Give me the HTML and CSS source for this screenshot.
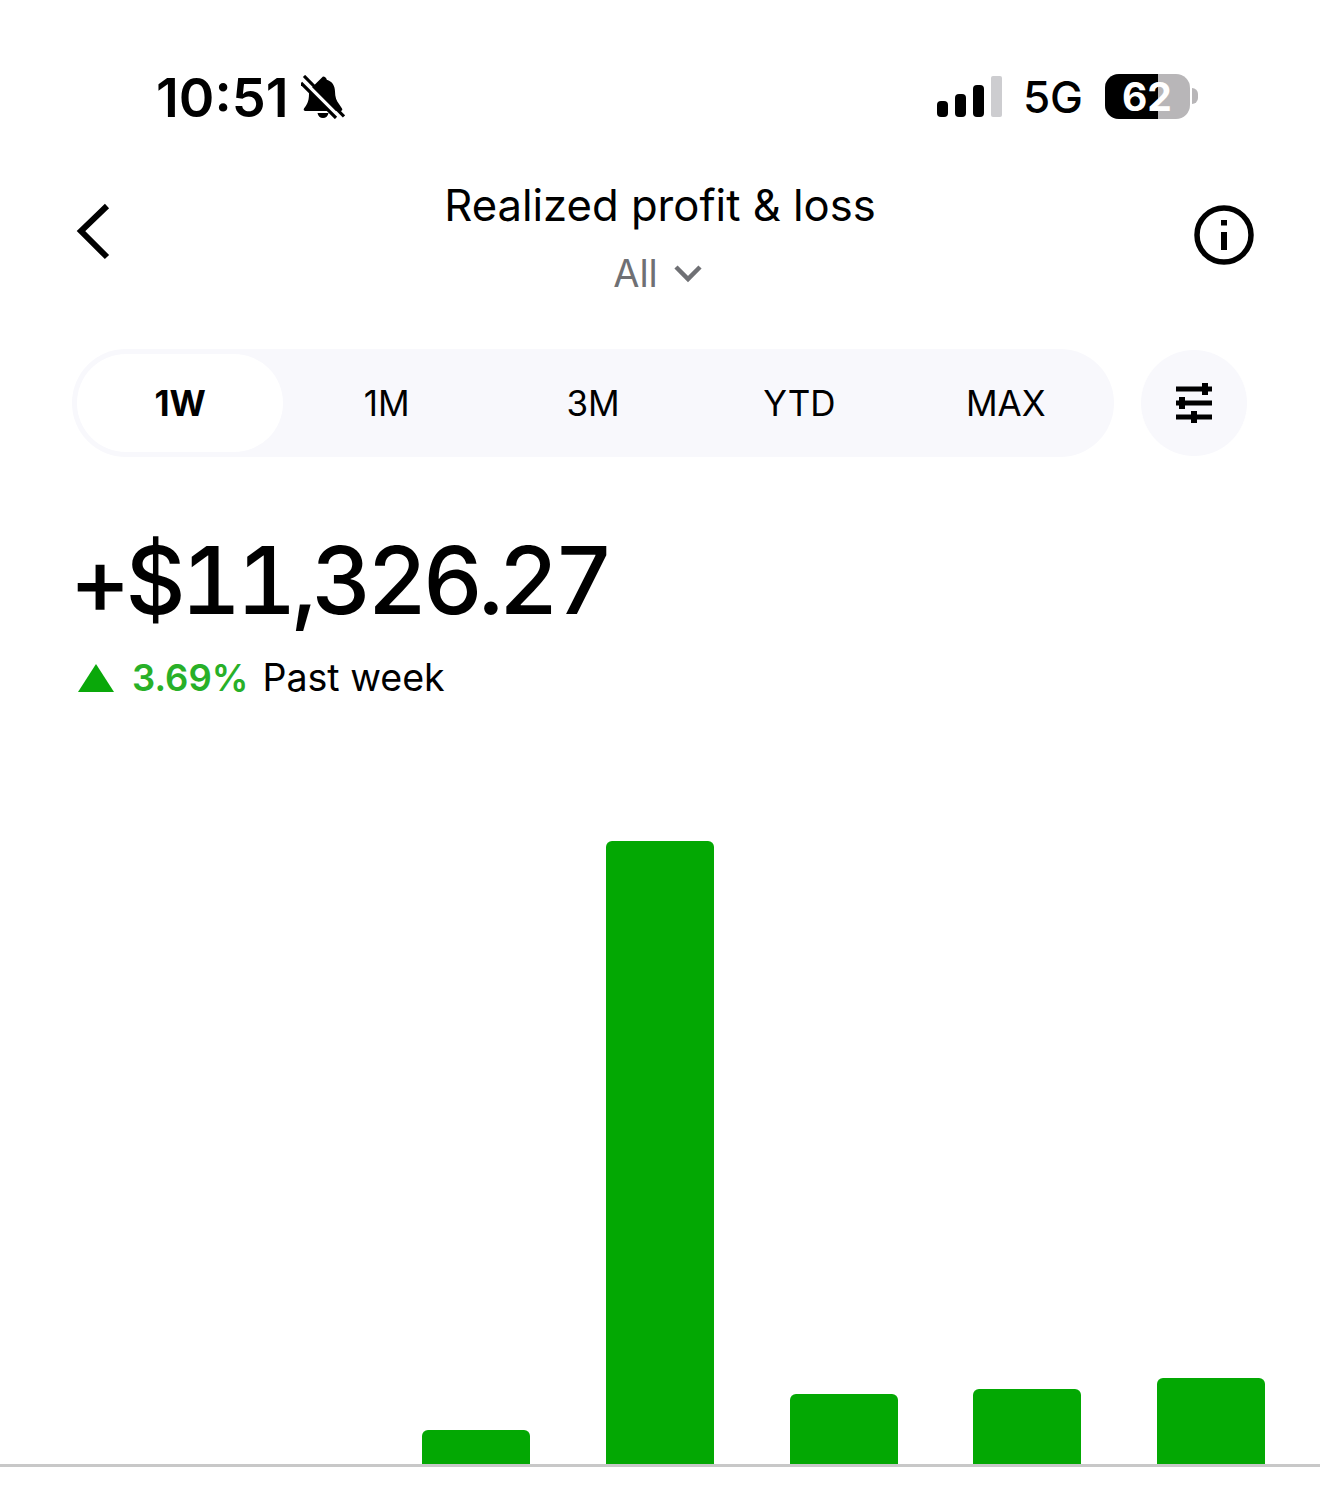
FILE: index.html
```html
<!DOCTYPE html>
<html lang="en">
<head>
    <meta charset="UTF-8">
    <title>Realized profit &amp; loss</title>
    <link rel="stylesheet" href="styles.css">
</head>
<body>
    <div class="status-bar">
        <div class="status-left">
            <span class="time">10:51</span>
            <svg class="bell" width="44" height="44" viewBox="0 0 44 44">
                <path d="M22 1.500c2 0 3.500 1.300 3.800 3.200 5.300 1.500 8.200 6 8.200 11.800 0 5.500 1.500 9.500 4 12.500l3 4.500c.8 1.200 0 2.500-1.500 2.500H4.500C3 36 2.200 34.700 3 33.500c2.500-3.500 5-6.500 5-14.500 0-1.500.2-3 .6-4.300zM16.500 38h11c-.4 3-2.700 5-5.500 5s-5.100-2-5.500-5z" fill="#000"/>
                <path d="M1 5l38 38" stroke="#fff" stroke-width="4" fill="none"/>
                <path d="M3 1l40 40.500" stroke="#000" stroke-width="3.200" fill="none"/>
                <path d="M0 8l35 35" stroke="#000" stroke-width="3.200" fill="none"/>
            </svg>
        </div>
        <div class="status-right">
            <div class="signal">
                <span class="sig sig-1"></span>
                <span class="sig sig-2"></span>
                <span class="sig sig-3"></span>
                <span class="sig sig-4"></span>
            </div>
            <span class="network">5G</span>
            <div class="battery">
                <div class="battery-body">
                    <div class="battery-fill"></div>
                    <span class="battery-text">62</span>
                </div>
                <span class="battery-nub"></span>
            </div>
        </div>
    </div>

    <div class="top-bar">
        <svg class="back" width="36" height="58" viewBox="0 0 36 58">
            <path d="M31 3L5 28l26 26" fill="none" stroke="#000" stroke-width="6"/>
        </svg>
        <div class="top-title">
            <div class="title">Realized profit &amp; loss</div>
            <div class="subtitle">
                <span>All</span>
                <svg width="30" height="20" viewBox="0 0 30 20">
                    <path d="M3 4l12 12L27 4" fill="none" stroke="#6f7074" stroke-width="4.500"/>
                </svg>
            </div>
        </div>
        <svg class="info" width="60" height="60" viewBox="0 0 60 60">
            <circle cx="30" cy="30" r="27" fill="none" stroke="#000" stroke-width="5.500"/>
            <rect x="27" y="15" width="6" height="5.500" fill="#000"/>
            <rect x="27" y="27" width="6" height="18" fill="#000"/>
        </svg>
    </div>

    <div class="range-row">
        <div class="range-tabs">
            <div class="tab tab-active">1W</div>
            <div class="tab">1M</div>
            <div class="tab">3M</div>
            <div class="tab">YTD</div>
            <div class="tab">MAX</div>
        </div>
        <div class="filter">
            <svg width="38" height="42" viewBox="0 0 38 42">
                <path d="M1 7h36M1 21h36M1 35h36" stroke="#000" stroke-width="5" fill="none"/>
                <path d="M30 1v12M7 15v12M19 29v12" stroke="#000" stroke-width="6" fill="none"/>
            </svg>
        </div>
    </div>

    <div class="amount">+$11,326.27</div>
    <div class="change">
        <svg width="36" height="30" viewBox="0 0 36 30">
            <path d="M18 1l18 28H0z" fill="#0aa80a"/>
        </svg>
        <span class="percent">3.69%</span>
        <span class="period">Past week</span>
    </div>

    <div class="chart">
        <div class="bar" style="height: 34px"></div>
        <div class="bar" style="height: 623px"></div>
        <div class="bar" style="height: 70px"></div>
        <div class="bar" style="height: 75px"></div>
        <div class="bar" style="height: 86px"></div>
    </div>
</body>
</html>
```

FILE: styles.css
```css
body {
    font-family: Inter, "Noto Sans", sans-serif;
    background-color: #fff;
    color: #000;
    margin: 0;
    width: 1320px;
    height: 1496px;
    overflow: hidden;
}

.status-bar {
    display: flex;
    justify-content: space-between;
    align-items: center;
    height: 46px;
    padding: 74px 122px 0 156px;
}

.status-left {
    display: flex;
    align-items: center;
    gap: 13px;
}

.time {
    font-size: 54px;
    font-weight: 600;
    line-height: 48px;
    margin-top: 2px;
}

.bell {
    display: block;
}

.status-right {
    display: flex;
    align-items: center;
}

.signal {
    display: flex;
    align-items: flex-end;
    gap: 7px;
    height: 42px;
    margin: -2px 21px 0 0;
}

.sig {
    width: 11px;
    background-color: #000;
    border-radius: 4px;
}

.sig-1 { height: 16px; }
.sig-2 { height: 23px; }
.sig-3 { height: 32px; }
.sig-4 { height: 41px; background-color: #cdcdd0; border-radius: 2px; }

.network {
    font-size: 44px;
    font-weight: 500;
    margin-right: 22px;
}

.battery {
    display: flex;
    align-items: center;
    gap: 2px;
    margin-top: -2px;
}

.battery-body {
    position: relative;
    width: 85px;
    height: 45px;
    border-radius: 14px;
    overflow: hidden;
    background-color: #b8b6b8;
}

.battery-fill {
    width: 53px;
    height: 100%;
    background-color: #000;
}

.battery-text {
    position: absolute;
    top: 0;
    left: 17px;
    font-size: 39px;
    font-weight: 700;
    line-height: 45px;
    color: #fff;
}

.battery-nub {
    width: 6px;
    height: 16px;
    background-color: #b8b6b8;
    border-radius: 0 8px 8px 0;
}

.top-bar {
    display: flex;
    justify-content: space-between;
    align-items: flex-start;
    margin-top: 60px;
    padding: 0 66px 0 76px;
    height: 169px;
}

.back {
    margin-top: 23px;
}

.top-title {
    text-align: center;
    margin-left: 14px;
}

.title {
    font-size: 43.600px;
    line-height: 54px;
    margin-top: -1px;
}

.subtitle {
    display: flex;
    justify-content: center;
    align-items: center;
    gap: 15px;
    padding-right: 4px;
    font-size: 38px;
    color: #6f7074;
    margin-top: 17px;
    line-height: 46px;
}

.info {
    margin-top: 25px;
}

.range-row {
    display: flex;
    align-items: center;
    gap: 27px;
    padding-left: 72px;
}

.range-tabs {
    display: flex;
    width: 1042px;
    height: 108px;
    padding: 5px;
    box-sizing: border-box;
    background-color: #f8f8fc;
    border-radius: 54px;
}

.tab {
    flex: 1;
    display: flex;
    align-items: center;
    justify-content: center;
    font-size: 35px;
    border-radius: 49px;
}

.tab-active {
    background-color: #fff;
    font-weight: 700;
}

.filter {
    width: 106px;
    height: 106px;
    display: flex;
    align-items: center;
    justify-content: center;
    background-color: #f8f8fc;
    border-radius: 50%;
}

.amount {
    font-size: 93px;
    font-weight: 500;
    line-height: 110px;
    letter-spacing: -4.800px;
    font-variant-numeric: tabular-nums;
    margin: 68px 0 0 70px;
}

.change {
    display: flex;
    align-items: center;
    margin: 19px 0 0 78px;
    font-size: 37.600px;
    line-height: 48px;
}

.percent {
    color: #28b028;
    font-weight: 600;
    font-size: 36.500px;
    margin: 0 14px 0 18px;
}

.chart {
    display: flex;
    justify-content: flex-end;
    align-items: flex-end;
    gap: 75.750px;
    height: 690px;
    margin-top: 72px;
    padding-right: 55px;
    border-bottom: 3px solid #c8c8c8;
}

.bar {
    width: 108px;
    background-color: #03a803;
    border-radius: 6px 6px 0 0;
}
```
